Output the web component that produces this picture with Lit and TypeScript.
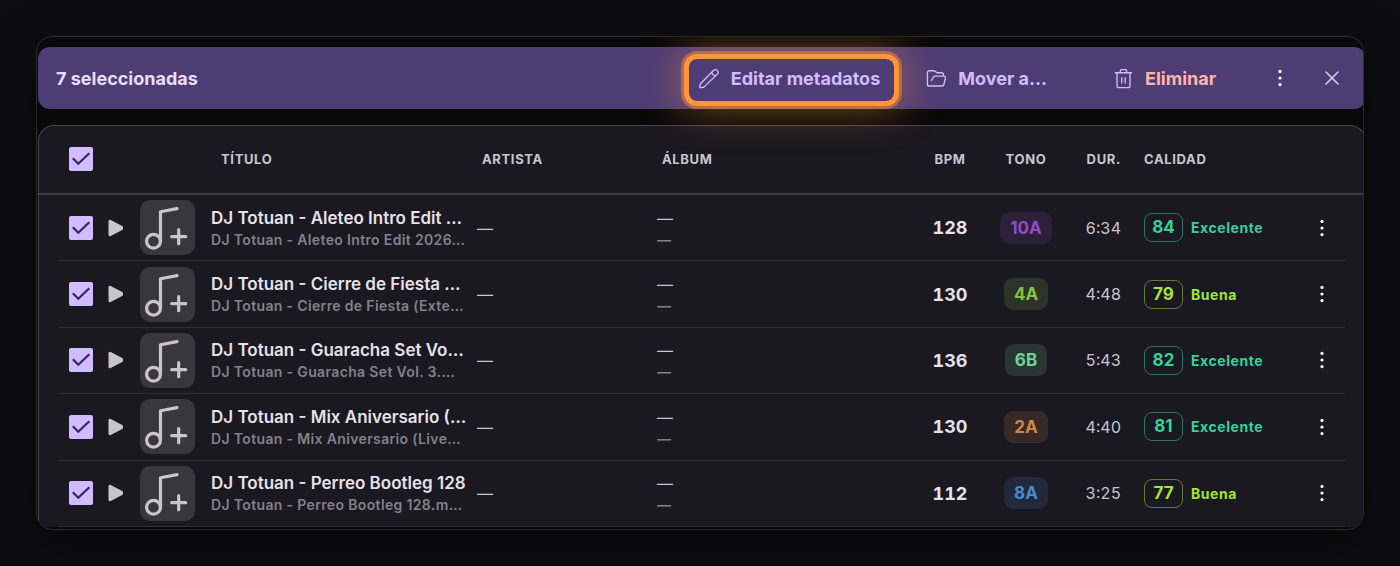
import { LitElement, html, css, svg } from "lit";
import { customElement, property } from "lit/decorators.js";
import { classMap } from "lit/directives/class-map.js";

interface Track {
  title: string;
  file: string;
  bpm: number;
  key: string;
  duration: string;
  score: number;
  quality: "Excelente" | "Buena";
}

const TRACKS: Track[] = [
  { title: "DJ Totuan - Aleteo Intro Edit 2026", file: "DJ Totuan - Aleteo Intro Edit 2026.mp3", bpm: 128, key: "10A", duration: "6:34", score: 84, quality: "Excelente" },
  { title: "DJ Totuan - Cierre de Fiesta Extended", file: "DJ Totuan - Cierre de Fiesta (Extended).mp3", bpm: 130, key: "4A", duration: "4:48", score: 79, quality: "Buena" },
  { title: "DJ Totuan - Guaracha Set Vol. 3", file: "DJ Totuan - Guaracha Set Vol. 3.mp3", bpm: 136, key: "6B", duration: "5:43", score: 82, quality: "Excelente" },
  { title: "DJ Totuan - Mix Aniversario (Live)", file: "DJ Totuan - Mix Aniversario (Live).mp3", bpm: 130, key: "2A", duration: "4:40", score: 81, quality: "Excelente" },
  { title: "DJ Totuan - Perreo Bootleg 128", file: "DJ Totuan - Perreo Bootleg 128.mp3", bpm: 112, key: "8A", duration: "3:25", score: 77, quality: "Buena" },
];

const dots = html`<svg class="dots" viewBox="0 0 20 20" width="20" height="20" fill="currentColor" aria-hidden="true">
  ${[3.4, 10, 16.6].map((y) => svg`<circle cx="10" cy=${y} r="1.6"></circle>`)}
</svg>`;

@customElement("check-box")
export class CheckBox extends LitElement {
  @property() label = "";

  static styles = css`
    :host {
      display: block;
    }
    .box {
      display: grid;
      width: 24px;
      height: 24px;
    }
    .box > * {
      grid-area: 1 / 1;
    }
    .input {
      appearance: none;
      width: 24px;
      height: 24px;
      margin: 0;
      border: 2px solid #948f99;
      border-radius: 2px;
    }
    .input:checked {
      border-color: #d0bcff;
      background: #d0bcff;
    }
    .mark {
      pointer-events: none;
      visibility: hidden;
    }
    .input:checked + .mark {
      visibility: visible;
    }
  `;

  render() {
    return html`<label class="box">
      <input class="input" type="checkbox" checked aria-label=${this.label} />
      <svg class="mark" viewBox="0 0 24 24" width="24" height="24" fill="none" stroke="#38275f" stroke-width="2.2" aria-hidden="true">
        <path d="M3.8 11.2 9.3 16.8 20.3 6.2"></path>
      </svg>
    </label>`;
  }
}

@customElement("app-root")
export class AppRoot extends LitElement {
  static styles = css`
    :host {
      display: flex;
      flex-direction: column;
      box-sizing: border-box;
      min-height: 100vh;
      padding: 36px;
      background: #0e0e10;
      color: #e6e1e9;
      font-family: Inter, "Liberation Sans", sans-serif;
    }
    button {
      display: flex;
      align-items: center;
      justify-content: center;
      padding: 0;
      border: 0;
      background: none;
      color: inherit;
      font: inherit;
      cursor: pointer;
    }
    svg {
      display: block;
      flex: none;
    }
    .panel {
      flex: 1;
      display: flex;
      flex-direction: column;
      gap: 16px;
      padding: 10px 0 2px 1px;
      border: 1px solid #2a292c;
      border-radius: 16px;
      background: #090909;
      box-shadow: 0 16px 48px rgba(0, 0, 0, 0.55);
      overflow: hidden;
    }

    .toolbar {
      position: relative;
      z-index: 1;
      display: flex;
      align-items: center;
      height: 62px;
      margin-right: -3px;
      padding: 0 14px 0 18px;
      box-sizing: border-box;
      border-radius: 12px;
      background: #4e3d75;
      color: #d0bcff;
      font-size: 18px;
      font-weight: 700;
    }
    .count {
      flex: 1;
      color: #e9ddff;
    }
    .action {
      height: 42px;
      gap: 11px;
      padding: 0 12px 0 10px;
      white-space: nowrap;
    }
    .spot {
      position: relative;
      padding-right: 14px;
    }
    .spot::after {
      content: "";
      position: absolute;
      inset: 2px 0 -2px;
      border-radius: 8px;
      box-shadow:
        0 0 0 5px #ff9536,
        0 0 0 8px rgba(255, 149, 54, 0.45),
        0 0 40px 8px rgba(255, 149, 54, 0.45);
    }
    .move {
      margin: 0 44px 0 22px;
    }
    .danger {
      color: #ffb4ab;
      margin-right: 32px;
    }
    .danger svg {
      color: #d0bcff;
    }
    .round {
      width: 40px;
      height: 40px;
      border-radius: 20px;
      color: #ffffff;
    }
    .close {
      margin-left: 12px;
      color: #d5cfdb;
    }

    .tracks {
      flex: 1;
      display: flex;
      flex-direction: column;
      margin-right: -3px;
      border: 1px solid #49464f;
      border-bottom: 0;
      border-radius: 16px 16px 0 0;
      background: #1a1821;
    }
    .head {
      display: block;
      border-bottom: 2px solid #3e3c44;
    }
    .body {
      flex: 1;
      display: grid;
      grid-auto-rows: 1fr;
    }
    .row {
      display: grid;
      grid-template-columns:
        49px 32px minmax(0, 337fr) minmax(0, 180fr) minmax(0, 268fr)
        50px 102px 44px 177px 47px;
      align-items: center;
      min-height: 64px;
      margin: 0 20px;
    }
    .body .row {
      border-bottom: 1px solid #302e36;
    }
    .head .row {
      min-height: 66px;
      padding-bottom: 1px;
    }
    .cell {
      padding: 0;
      text-align: left;
      white-space: nowrap;
    }
    .head .cell {
      color: #cac4cf;
      font-size: 13px;
      font-weight: 700;
      letter-spacing: 0.05em;
      text-transform: uppercase;
    }
    .head .named {
      padding-left: 81px;
    }
    .head .offset {
      padding-left: 5px;
    }
    .cell.pick {
      padding-left: 10px;
    }
    .cell.mid {
      display: flex;
      justify-content: center;
    }
    .cell.end {
      text-align: right;
    }
    .cell.quality {
      padding-left: 23px;
    }
    .play {
      color: #cac4cf;
    }
    .song {
      display: flex;
      align-items: center;
      gap: 16px;
      padding-right: 10px;
    }
    .art {
      width: 55px;
      height: 55px;
      border-radius: 10px;
      background: #38363e;
      color: #cac4cf;
      flex: none;
    }
    .lines {
      min-width: 0;
    }
    .title,
    .file {
      overflow: hidden;
      text-overflow: ellipsis;
    }
    .title {
      font-size: 17px;
      line-height: 24px;
      font-weight: 600;
    }
    .file {
      margin-right: 1px;
      color: #838089;
      font-size: 14px;
      line-height: 20px;
      font-weight: 600;
      letter-spacing: 0.025em;
    }
    .plain {
      color: #cac4cf;
      font-size: 16px;
      line-height: 24px;
    }
    .bpm {
      font-size: 18px;
      font-weight: 700;
      font-variant-numeric: tabular-nums;
    }
    .length {
      color: #cac4cf;
      font-size: 16px;
      font-variant-numeric: tabular-nums;
    }
    .key {
      padding: 0 10px;
      border-radius: 9px;
      font-size: 17px;
      line-height: 32px;
      font-weight: 700;
    }
    .k10A { color: #8e4bcb; background: #2e203b; }
    .k4A { color: #85c341; background: #2d3328; }
    .k6B { color: #6fd09c; background: #293733; }
    .k2A { color: #cb8744; background: #372927; }
    .k8A { color: #4b8bcb; background: #22293b; }
    .grade {
      display: flex;
      align-items: center;
      gap: 8px;
      color: #34d399;
    }
    .good {
      color: #a3e635;
    }
    .score {
      box-sizing: border-box;
      width: 39px;
      border: 1px solid color-mix(in srgb, currentColor 50%, transparent);
      border-radius: 8px;
      text-align: center;
      font-size: 17px;
      line-height: 27px;
      font-weight: 700;
    }
    .word {
      font-size: 14px;
      font-weight: 700;
      letter-spacing: 0.04em;
    }
    .more {
      width: 40px;
      height: 40px;
      color: #ffffff;
    }
  `;

  private toolbar() {
    return html`<div class="toolbar" role="toolbar" aria-label="Acciones">
      <span class="count">7 seleccionadas</span>
      <button class="action spot">
        <svg viewBox="0 0 22 22" width="21" height="21" fill="none" stroke="currentColor" stroke-width="1.4" stroke-linejoin="round" stroke-linecap="round" aria-hidden="true">
          <path d="M1 20.400c-.3-1.500 0-3.400 1.300-4.700L15.200 2.600a2.700 2.700 0 0 1 4 3.800L6.200 19c-1.300 1.200-3.500 1.700-5.200 1.400Z"></path>
          <path d="M13.300 4.700c.5 2 1.800 3.300 3.800 3.800"></path>
        </svg>
        Editar metadatos
      </button>
      <button class="action move">
        <svg viewBox="0 0 22 22" width="21" height="21" fill="none" stroke="currentColor" stroke-width="1.4" stroke-linejoin="round" stroke-linecap="round" aria-hidden="true">
          <path d="M18.3 8.500V7a2 2 0 0 0-2-2h-5L9.600 3.300a1.500 1.500 0 0 0-1-.4H3.500a2 2 0 0 0-2 2v12a2 2 0 0 0 2 2h13.300a2 2 0 0 0 2-1.700l1.500-6.700a1.600 1.600 0 0 0-1.600-2H9.500a2 2 0 0 0-1.700 1L5.700 13"></path>
        </svg>
        Mover a...
      </button>
      <button class="action danger">
        <svg viewBox="0 0 22 22" width="21" height="21" fill="none" stroke="currentColor" stroke-width="1.4" stroke-linejoin="round" stroke-linecap="round" aria-hidden="true">
          <path d="M2.500 5h17M7.300 4.800 7.900 2.500a1 1 0 0 1 1-.8h4.200a1 1 0 0 1 1 .8l.6 2.300M4.200 5.200v13.300a2 2 0 0 0 2 2h9.600a2 2 0 0 0 2-2V5.200M9.200 10v5.700M12.800 10v5.700"></path>
        </svg>
        Eliminar
      </button>
      <button class="round" aria-label="Más acciones">${dots}</button>
      <button class="round close" aria-label="Cerrar">
        <svg viewBox="0 0 20 20" width="20" height="20" fill="none" stroke="currentColor" stroke-width="1.6" stroke-linecap="round" aria-hidden="true">
          <path d="m4 4 12 12M16 4 4 16"></path>
        </svg>
      </button>
    </div>`;
  }

  private row(t: Track) {
    return html`<tr class="row">
      <td class="cell pick"><check-box label=${"Seleccionar " + t.title}></check-box></td>
      <td class="cell">
        <button class="play" aria-label=${"Reproducir " + t.title}>
          <svg viewBox="0 0 16 18" width="16" height="18" fill="currentColor" stroke="currentColor" stroke-width="3" stroke-linejoin="round" aria-hidden="true">
            <path d="M2 2.300v13.400L13.500 9.700V8.300Z"></path>
          </svg>
        </button>
      </td>
      <td class="cell song">
        <button class="art" aria-label="Añadir carátula">
          <svg viewBox="0 0 55 55" width="55" height="55" fill="none" stroke="currentColor" stroke-width="3.2" stroke-linecap="round" stroke-linejoin="round" aria-hidden="true">
            <circle cx="13.500" cy="41.300" r="6.900"></circle>
            <path d="M20.500 41.300V11.700L37 8.600M38.700 29.700v14M31.700 36.700h14"></path>
          </svg>
        </button>
        <div class="lines">
          <div class="title">${t.title}</div>
          <div class="file">${t.file}</div>
        </div>
      </td>
      <td class="cell"><div class="plain">—</div></td>
      <td class="cell">
        <div class="plain">—</div>
        <div class="file">—</div>
      </td>
      <td class="cell mid bpm">${t.bpm}</td>
      <td class="cell mid"><span class="key k${t.key}">${t.key}</span></td>
      <td class="cell end length">${t.duration}</td>
      <td class="cell quality">
        <div class=${classMap({ grade: true, good: t.quality === "Buena" })}>
          <span class="score">${t.score}</span><span class="word">${t.quality}</span>
        </div>
      </td>
      <td class="cell mid"><button class="more" aria-label=${"Opciones de " + t.title}>${dots}</button></td>
    </tr>`;
  }

  render() {
    return html`<main class="panel">
      ${this.toolbar()}
      <table class="tracks">
        <thead class="head">
          <tr class="row">
            <th class="cell pick"><check-box label="Seleccionar todo"></check-box></th>
            <td class="cell"></td>
            <th class="cell named">Título</th>
            <th class="cell offset">Artista</th>
            <th class="cell offset">Álbum</th>
            <th class="cell mid">BPM</th>
            <th class="cell mid">Tono</th>
            <th class="cell end">Dur.</th>
            <th class="cell quality">Calidad</th>
            <td class="cell"></td>
          </tr>
        </thead>
        <tbody class="body">
          ${TRACKS.map((t) => this.row(t))}
        </tbody>
      </table>
    </main>`;
  }
}
